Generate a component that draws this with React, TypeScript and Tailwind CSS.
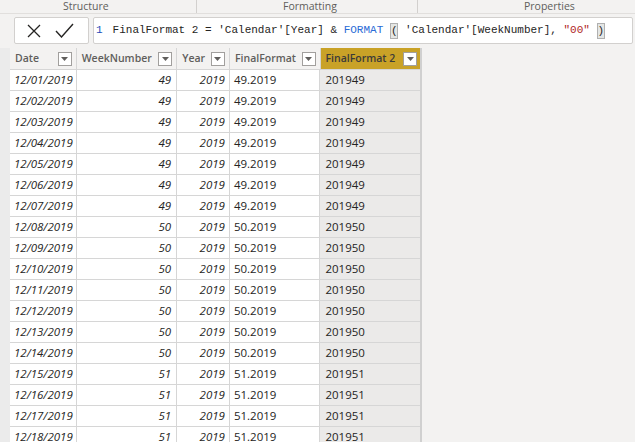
import React from "react";

const rows: [string, number][] = [
  ["12/01/2019", 49],
  ["12/02/2019", 49],
  ["12/03/2019", 49],
  ["12/04/2019", 49],
  ["12/05/2019", 49],
  ["12/06/2019", 49],
  ["12/07/2019", 49],
  ["12/08/2019", 50],
  ["12/09/2019", 50],
  ["12/10/2019", 50],
  ["12/11/2019", 50],
  ["12/12/2019", 50],
  ["12/13/2019", 50],
  ["12/14/2019", 50],
  ["12/15/2019", 51],
  ["12/16/2019", 51],
  ["12/17/2019", 51],
  ["12/18/2019", 51],
];

function Drop() {
  return (
    <span className="flex h-[14px] w-[14px] shrink-0 items-center justify-center border border-[#a19f9d] bg-white">
      <svg width="7" height="4" viewBox="0 0 7 4">
        <path d="M0 0 L7 0 L3.5 4 Z" fill="#605e5c" />
      </svg>
    </span>
  );
}

export default function App() {
  const font = { fontFamily: '"Open Sans", "Noto Sans", sans-serif' };
  return (
    <div className="h-[442px] w-[635px] overflow-hidden bg-[#f3f2f1]" style={font}>
      {/* ribbon labels */}
      <div className="flex h-[14px] border-b border-[#e1dfdd] text-[10.5px] leading-[13px] text-[#605e5c] whitespace-nowrap">
        <div className="w-[197px] border-r border-[#d2d0ce] pl-[63px]">Structure</div>
        <div className="w-[221px] border-r border-[#d2d0ce] pl-[86px]">Formatting</div>
        <div className="flex-1 pl-[106px]">Properties</div>
      </div>
      {/* formula bar */}
      <div className="flex h-[34px] gap-[4px] pl-[14px] pr-[2px] pt-[3px]">
        <div className="flex h-[27px] w-[75px] items-center gap-[14px] rounded-[2px] border border-[#d2d0ce] bg-white pl-[12px]">
          <svg width="14" height="14" viewBox="0 0 14 14">
            <path d="M1 1 L13 13 M13 1 L1 13" stroke="#252423" strokeWidth="1.3" fill="none" />
          </svg>
          <svg width="19" height="15" viewBox="0 0 19 15">
            <path d="M1 8 L6.5 14 L18 1" stroke="#252423" strokeWidth="1.4" fill="none" />
          </svg>
        </div>
        <div
          className="flex h-[27px] flex-1 items-center rounded-[2px] border border-[#d2d0ce] bg-white pl-[2px] text-[11px] whitespace-pre text-[#252423]"
          style={{ fontFamily: '"Liberation Mono", "DejaVu Sans Mono", monospace' }}
        >
          <span className="text-[#1e4bb8]">1</span>
          <span className="ml-[10px]">{"FinalFormat 2 = 'Calendar'[Year] & "}</span>
          <span className="text-[#2a6bd6]">FORMAT</span>
          <span> </span>
          <span className="border border-[#b0b0b0] bg-[#e4e6e4] leading-[14px]">(</span>
          <span>{" 'Calendar'[WeekNumber], "}</span>
          <span className="text-[#b02525]">"00"</span>
          <span> </span>
          <span className="border border-[#b0b0b0] bg-[#e4e6e4] leading-[14px]">)</span>
        </div>
      </div>
      {/* table */}
      <div className="flex">
        <div className="h-[400px] w-[10px] shrink-0 bg-[#ebebeb]" />
        <div className="w-[412px] shrink-0 border-r-2 border-[#d0d0d0] bg-white">
          <div className="flex h-[22px] whitespace-nowrap bg-[#f3f2f1] text-[10.5px] font-semibold text-[#605e5c]">
            <div className="flex w-[67px] items-center justify-between border-r border-b border-[#d6d6d6] pl-[5px] pr-[4px]">
              <span>Date</span>
              <Drop />
            </div>
            <div className="flex w-[101px] items-center justify-between border-r border-b border-[#d6d6d6] pl-[5px] pr-[4px]">
              <span>WeekNumber</span>
              <Drop />
            </div>
            <div className="flex w-[53px] items-center justify-between border-r border-b border-[#d6d6d6] pl-[5px] pr-[4px]">
              <span>Year</span>
              <Drop />
            </div>
            <div className="flex w-[91px] items-center justify-between border-r border-b border-[#d6d6d6] pl-[5px] pr-[4px]">
              <span>FinalFormat</span>
              <Drop />
            </div>
            <div className="flex w-[100px] items-center justify-between border-b border-[#d6d6d6] bg-[#c9a227] pl-[5px] pr-[3px] text-[#3b3a39]">
              <span>FinalFormat 2</span>
              <Drop />
            </div>
          </div>
          {rows.map(([d, w]) => (
            <div key={d} className="flex h-[21px] whitespace-nowrap text-[11.5px] leading-[20px] text-[#252423]">
              <div className="w-[67px] border-r border-b border-[#d6d6d6] pl-[4px] italic">{d}</div>
              <div className="w-[101px] border-r border-b border-[#d6d6d6] pr-[5px] text-right italic">{w}</div>
              <div className="w-[53px] border-r border-b border-[#d6d6d6] pr-[4px] text-right italic">2019</div>
              <div className="w-[91px] border-r border-b border-[#d6d6d6] pl-[4px]">{w}.2019</div>
              <div className="w-[100px] border-b border-[#d6d6d6] bg-[#ebeae9] pl-[5px]">2019{w}</div>
            </div>
          ))}
        </div>
      </div>
    </div>
  );
}
